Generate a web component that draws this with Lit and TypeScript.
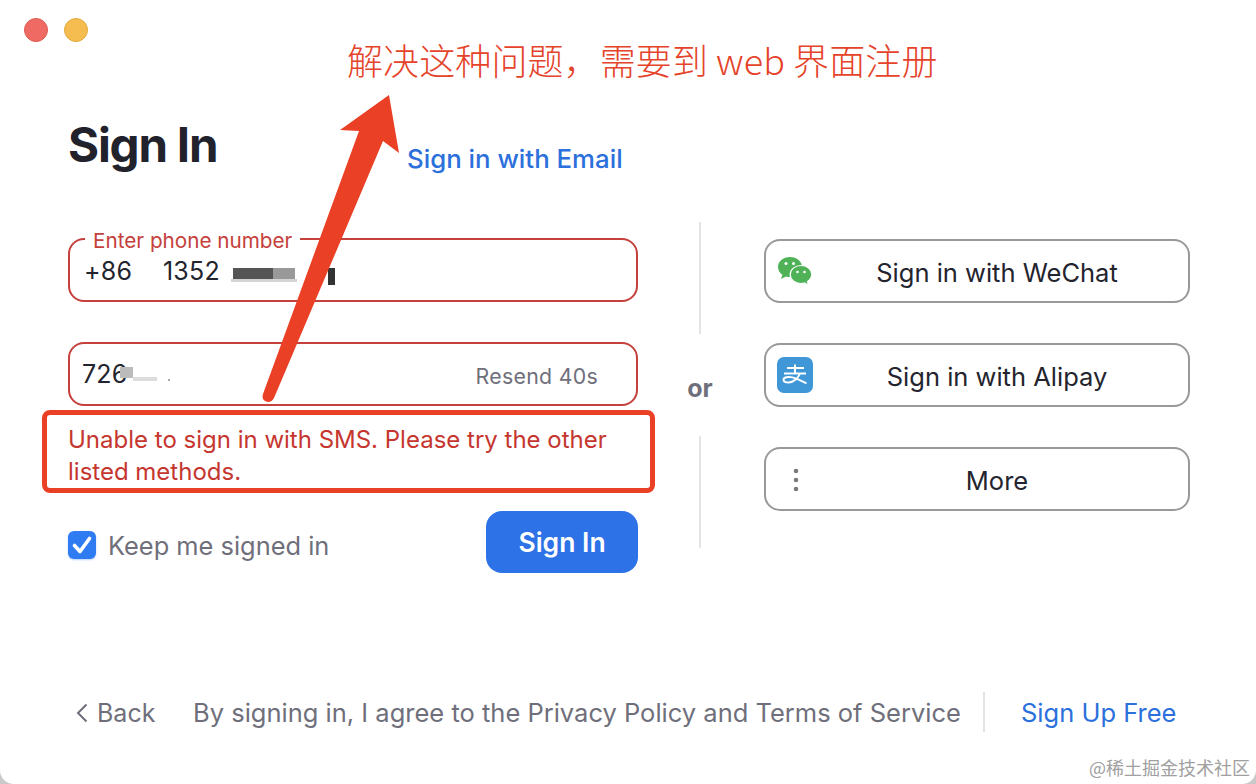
import { LitElement, html, css } from "lit";
import { customElement } from "lit/decorators.js";

@customElement("app-root")
export class AppRoot extends LitElement {
  static styles = css`
    :host { display: block; width: 1256px; height: 784px; background: #c9c9c9; overflow: hidden; font-family: Inter, "Noto Sans", sans-serif; color: #24242e; }
    .window { position: relative; width: 1256px; height: 784px; box-sizing: border-box; background: #fff; border-radius: 0 0 14px 14px; display: flex; flex-direction: column; overflow: hidden; }
    .lights { display: flex; gap: 16px; padding: 18px 0 0 24px; height: 24px; }
    .light { width: 24px; height: 24px; border-radius: 50%; box-sizing: border-box; }
    .red { background: #ee6a62; border: 1px solid #dc5a52; }
    .yellow { background: #f5bd4f; border: 1px solid #e3a93f; }
    .body { display: flex; padding: 0 0 0 68px; margin-top: 78px; height: 510px; }
    .left { width: 570px; display: flex; flex-direction: column; }
    .head { display: flex; align-items: flex-start; height: 74px; }
    h1 { margin: 0; font-size: 47.5px; font-weight: 700; letter-spacing: -1.2px; color: #22222d; width: 339px; line-height: 50px; flex: none; }
    .email { font-size: 25.8px; line-height: 30px; padding-top: 24px; font-weight: 500; color: #2c70dc; letter-spacing: 0; white-space: nowrap; }
    .field { position: relative; box-sizing: border-box; width: 570px; border: 2px solid #c5413c; border-radius: 16px; display: flex; align-items: center; font-size: 25px; letter-spacing: 0.2px; color: #24242e; }
    .phone { height: 64px; margin-top: 44px; padding: 2px 0 0 14px; }
    .code { height: 64px; margin-top: 40px; padding: 0 38px 0 12px; justify-content: space-between; }
    .label { position: absolute; left: 15px; top: -11px; padding: 0 8px; background: #fff; font-size: 20.7px; line-height: 24px; color: #c5413c; letter-spacing: 0; white-space: nowrap; }
    .cc { width: 79px; }
    .resend { font-size: 21.3px; color: #6f6f7b; letter-spacing: 0.3px; padding-top: 4px; }
    .blur { position: absolute; }
    .b1 { left: 163px; top: 28px; width: 40px; height: 11px; background: #555; }
    .b2 { left: 203px; top: 28px; width: 22px; height: 11px; background: #999; }
    .b3 { left: 258px; top: 28px; width: 7px; height: 17px; background: #333; }
    .b4 { left: 50px; top: 23px; width: 13px; height: 11px; background: #bbb; }
    .b5 { left: 161px; top: 39px; width: 66px; height: 3px; background: #d4d4d4; }
    .b6 { left: 63px; top: 33px; width: 24px; height: 4px; background: #dcdcdc; }
    .b7 { left: 98px; top: 35px; width: 2px; height: 2px; background: #aaa; }
    .error { margin: 18px 0 0; font-size: 24px; line-height: 32px; color: #c5362f; width: 560px; }
    .actions { display: flex; justify-content: space-between; align-items: center; margin-top: 23px; }
    .keep { display: flex; align-items: center; gap: 12px; font-size: 25.4px; color: #6f6f7b; margin-top: 6px; }
    .check { width: 28px; height: 28px; border-radius: 6px; background: #2f7cf2; box-shadow: 0 1px 2px rgba(47,124,242,.35); display: flex; align-items: center; justify-content: center; }
    .submit { width: 152px; height: 62px; border-radius: 16px; background: #2d72e6; color: #fff; font-size: 26.5px; font-weight: 600; display: flex; align-items: center; justify-content: center; }
    .mid { width: 124px; margin-right: 2px; display: flex; flex-direction: column; align-items: center; padding-top: 102px; }
    .vline { width: 2px; height: 112px; background: #e4e4e6; flex: none; }
    .or { height: 102px; padding-top: 5px; box-sizing: border-box; display: flex; align-items: center; font-size: 25px; font-weight: 700; color: #6f6f7b; }
    .right { padding-top: 119px; display: flex; flex-direction: column; gap: 40px; }
    .btn { position: relative; box-sizing: border-box; width: 426px; height: 64px; border: 2px solid #999; border-radius: 16px; display: flex; align-items: center; justify-content: center; font-size: 25.5px; color: #24242e; padding: 2px 0 0 40px; }
    .btn svg { position: absolute; left: 11px; top: 50%; transform: translateY(-50%); }
    .foot { display: flex; align-items: center; height: 40px; margin-top: 62px; padding-left: 76px; font-size: 25.5px; color: #6f6f7b; white-space: nowrap; }
    .back { display: flex; align-items: center; gap: 9px; width: 117px; font-size: 25px; padding-top: 1px; }
    .terms { width: 768px; }
    .fline { width: 2px; height: 40px; background: #e4e4e6; margin: 0 36px 0 22px; }
    .signup { color: #2c70dc; }
    .note { position: absolute; left: 347px; top: 33px; font-family: "Noto Sans CJK SC", sans-serif; font-size: 36px; line-height: 52px; color: #e5432a; white-space: nowrap; font-weight: 300; letter-spacing: 0.1px; }
    .arrow { position: absolute; left: 0; top: 0; pointer-events: none; }
    .box { position: absolute; left: 42px; top: 410px; width: 613px; height: 83px; box-sizing: border-box; border: 5px solid #ea4025; border-radius: 8px; }
    .mark { position: absolute; right: 6px; bottom: 5px; font-family: "Noto Sans CJK SC", sans-serif; font-size: 18px; line-height: 24px; color: #a0a0a0; letter-spacing: 0; white-space: nowrap; }
  `;

  render() {
    return html`
      <div class="window">
        <div class="lights"><div class="light red"></div><div class="light yellow"></div></div>
        <div class="body">
          <div class="left">
            <div class="head"><h1>Sign In</h1><span class="email">Sign in with Email</span></div>
            <div class="field phone">
              <span class="label">Enter phone number</span>
              <span class="cc">+86</span><span>1352</span>
              <span class="blur b5"></span><span class="blur b1"></span><span class="blur b2"></span><span class="blur b3"></span>
            </div>
            <div class="field code">
              <span>726</span><span class="blur b6"></span><span class="blur b7"></span><span class="blur b4"></span>
              <span class="resend">Resend 40s</span>
            </div>
            <p class="error">Unable to sign in with SMS. Please try the other listed methods.</p>
            <div class="actions">
              <div class="keep">
                <span class="check"><svg width="24" height="24" viewBox="0 0 24 24"><path d="M4.500 12.500 10 18.500 19.500 5.500" fill="none" stroke="#fff" stroke-width="3.600" stroke-linecap="round" stroke-linejoin="round"/></svg></span>
                Keep me signed in
              </div>
              <div class="submit">Sign In</div>
            </div>
          </div>
          <div class="mid">
            <div class="vline"></div>
            <div class="or">or</div>
            <div class="vline"></div>
          </div>
          <div class="right">
            <div class="btn">
              <svg width="36" height="30" viewBox="0 0 36 30">
                <path d="M13 1C6 1 1 5.500 1 11c0 3.200 1.700 5.900 4.400 7.800L4 23l5-2.600c1.200.4 2.500.6 4 .6 7 0 12-4.500 12-10S20 1 13 1z" fill="#4fb257"/>
                <path d="M24 9.500c-6 0-10.800 4-10.800 9s4.800 9 10.800 9c1.200 0 2.300-.2 3.400-.5l4 2.200-1-3.600c2.600-1.700 4.400-4.200 4.400-7.100 0-5-4.800-9-10.800-9z" fill="#4fb257" stroke="#fff" stroke-width="1.200"/>
                <circle cx="9" cy="7.500" r="1.500" fill="#fff"/><circle cx="16.500" cy="7.500" r="1.500" fill="#fff"/>
                <circle cx="20.500" cy="16" r="1.300" fill="#fff"/><circle cx="27.500" cy="16" r="1.300" fill="#fff"/>
              </svg>
              Sign in with WeChat
            </div>
            <div class="btn">
              <svg width="36" height="36" viewBox="0 0 36 36">
                <rect width="36" height="36" rx="7" fill="#3f97d8"/>
                <path d="M10 11H27M18 7.500v9M7 16.500H29M23 16.500c-2 5-7 9-11.500 9-3 0-5-1-5-2.800 0-2.400 4.500-3.500 9-2.300 4 1 9 3.500 14 6" fill="none" stroke="#fff" stroke-width="2"/>
              </svg>
              Sign in with Alipay
            </div>
            <div class="btn">
              <svg width="36" height="26" viewBox="0 0 36 26">
                <circle cx="19" cy="5" r="2.300" fill="#7a7a7a"/><circle cx="19" cy="14" r="2.300" fill="#7a7a7a"/><circle cx="19" cy="23" r="2.300" fill="#7a7a7a"/>
              </svg>
              More
            </div>
          </div>
        </div>
        <div class="foot">
          <span class="back"><svg width="12" height="20" viewBox="0 0 12 20"><path d="M10.500 1.500 2 10l8.500 8.500" fill="none" stroke="#6f6f7b" stroke-width="2"/></svg>Back</span>
          <span class="terms">By signing in, I agree to the Privacy Policy and Terms of Service</span>
          <span class="fline"></span>
          <span class="signup">Sign Up Free</span>
        </div>
        <div class="note">解决这种问题，需要到 web 界面注册</div>
        <svg class="arrow" width="1256" height="784" viewBox="0 0 1256 784">
          <path d="M389 95 340 130 359 131 263 394Q261 401 268 402Q272 402 274 398L383 141 399 153Z" fill="#ea4025"/>
        </svg>
        <div class="box"></div>
        <div class="mark">@稀土掘金技术社区</div>
      </div>
    `;
  }
}
